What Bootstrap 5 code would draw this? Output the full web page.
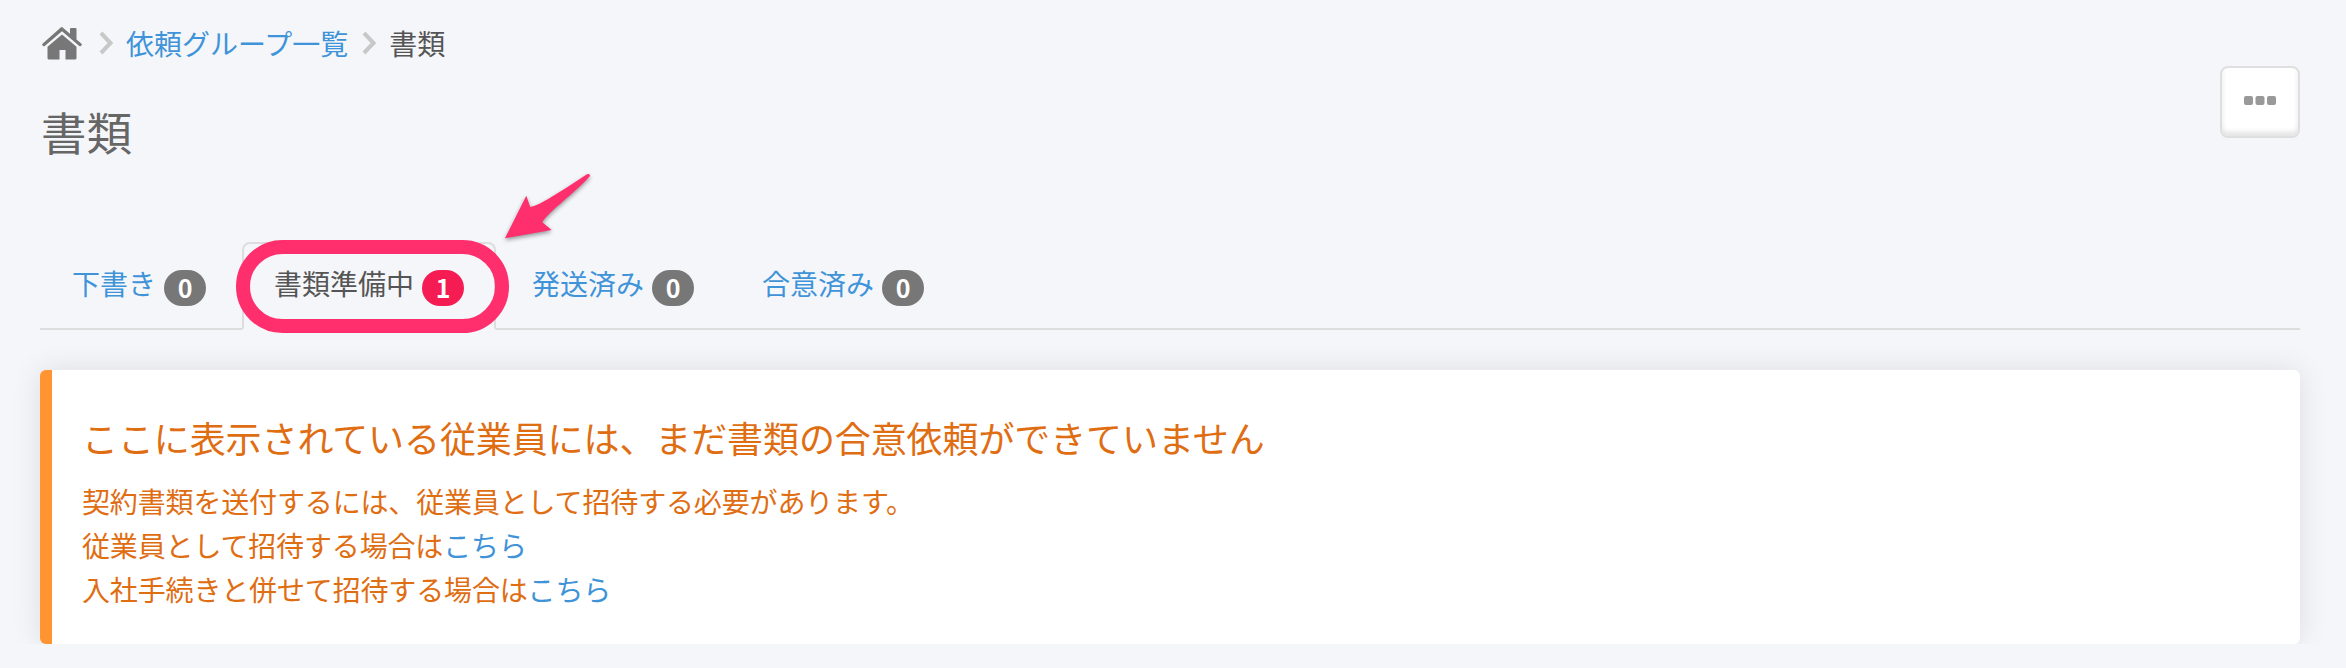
<!DOCTYPE html>
<html lang="ja">
<head>
<meta charset="utf-8">
<meta name="viewport" content="width=device-width, initial-scale=1">
<title>書類</title>
<link href="https://cdn.jsdelivr.net/npm/bootstrap@5.3.0/dist/css/bootstrap.min.css" rel="stylesheet">
<style>
body{background:#f5f6fa;color:#555;font-family:"Noto Sans CJK JP",sans-serif;font-size:28px;line-height:44px;overflow:hidden}
a{color:#3f93d8;text-decoration:none}
.page{padding:0 46px 0 40px}
.crumbs{height:44px;margin-top:21px;padding-left:2px;white-space:nowrap}
.crumb-home{margin-right:17px}
.crumb-sep{margin-right:12px}
.crumb-sep.second{margin-left:14px}
.heading-row{height:177px}
.heading-row h1{font-size:45.5px;line-height:60px;font-weight:400;color:#666;margin:36px 0 0 1px}
.btn-more{width:80px;height:72px;margin-top:1px;padding:0 0 4px;background:#fff;border:2px solid #dfdfdf;border-radius:8px;box-shadow:inset 0 -4px 5px #e4e4e4}
.doc-tabs{height:88px;border-bottom:2px solid #ddd;gap:4px}
.doc-tabs .nav-link{height:88px;padding:17px 30px 0;border:2px solid transparent;border-radius:8px 8px 0 0;color:#3f93d8;display:flex;align-items:flex-start;gap:8px;white-space:nowrap;margin:0}
.doc-tabs .nav-link.active{background:#f5f6fa;color:#555;border-color:#ddd #ddd #f5f6fa}
.count{width:42px;height:36px;margin-top:9px;padding:0;border-radius:18px;background:#777;font-size:25px;line-height:35px;font-weight:700}
.count.hot{background:#f41c52}
.ring{left:-6px;top:-2px;width:273px;height:93px;border:14px solid #ff2f6e;border-radius:47px;pointer-events:none}
.pointer{left:256px;top:-76px;pointer-events:none;filter:drop-shadow(0 2px 2px rgba(0,0,0,.4))}
.notice{height:274px;margin-top:40px;padding:41px 30px 0;border:0;border-left:12px solid #ff9430;border-radius:6px;color:#df6d12;box-shadow:0 0 30px rgba(0,0,0,.1)}
.notice h2{font-size:36px;line-height:52px;font-weight:400;margin:0 0 16px;letter-spacing:-.1px}
.notice p{margin:0;letter-spacing:-.15px}
</style>
</head>
<body>
<main class="page">
  <nav class="crumbs d-flex align-items-center" aria-label="breadcrumb">
    <a class="crumb-home d-flex" href="#" aria-label="ホーム"><svg width="40" height="33" viewBox="0 0 40 33" fill="#777"><path d="M20 0 28 6.800V2q0-1 1-1h4.500q1 0 1 1v10.500l5 4.200q.8.7.1 1.500l-.8.8q-.7.7-1.500 0L20 4.300 2.700 19q-.8.700-1.500 0l-.8-.8q-.7-.8.1-1.500L18.500.8Q20-.6 21.500.8Z"/><path d="M20 7.500 34.500 19.700V31q0 1.500-1.500 1.500h-9.500V23h-6v9.500H7q-1.500 0-1.500-1.500V19.700Z"/></svg></a>
    <svg class="crumb-sep" width="15" height="24" viewBox="0 0 15 24" fill="none" stroke="#c8c8c8" stroke-width="4"><path d="M2 2 11.500 12 2 22"/></svg>
    <a href="#">依頼グループ一覧</a>
    <svg class="crumb-sep second" width="15" height="24" viewBox="0 0 15 24" fill="none" stroke="#c8c8c8" stroke-width="4"><path d="M2 2 11.500 12 2 22"/></svg>
    <span>書類</span>
  </nav>
  <header class="heading-row d-flex justify-content-between align-items-start">
    <h1>書類</h1>
    <button class="btn btn-more d-flex align-items-center justify-content-center" type="button" aria-label="メニュー"><svg width="32" height="9" viewBox="0 0 32 9" fill="#999"><rect width="9" height="9" rx="2"/><rect x="11.500" width="9" height="9" rx="2"/><rect x="23" width="9" height="9" rx="2"/></svg></button>
  </header>
  <ul class="nav nav-tabs doc-tabs flex-nowrap">
    <li class="nav-item"><a class="nav-link" href="#">下書き<span class="badge count">0</span></a></li>
    <li class="nav-item position-relative"><a class="nav-link active" href="#">書類準備中<span class="badge count hot">1</span></a>
      <span class="ring position-absolute"></span>
      <svg class="pointer position-absolute" width="100" height="80" viewBox="498 166 100 80" fill="#ff2f6e"><path d="M505 238.300 526.300 195.700 530.300 207C539 206 560 192 587 174.300Q590 173.200 590 176C575 193 548 212 542.300 222.300L551.700 230Z"/></svg>
    </li>
    <li class="nav-item"><a class="nav-link" href="#">発送済み<span class="badge count">0</span></a></li>
    <li class="nav-item"><a class="nav-link" href="#">合意済み<span class="badge count">0</span></a></li>
  </ul>
  <section class="card notice">
    <h2>ここに表示されている従業員には、まだ書類の合意依頼ができていません</h2>
    <p>契約書類を送付するには、従業員として招待する必要があります。<br>従業員として招待する場合は<a href="#">こちら</a><br>入社手続きと併せて招待する場合は<a href="#">こちら</a></p>
  </section>
</main>
<script src="https://cdn.jsdelivr.net/npm/bootstrap@5.3.0/dist/js/bootstrap.bundle.min.js"></script>
</body>
</html>
